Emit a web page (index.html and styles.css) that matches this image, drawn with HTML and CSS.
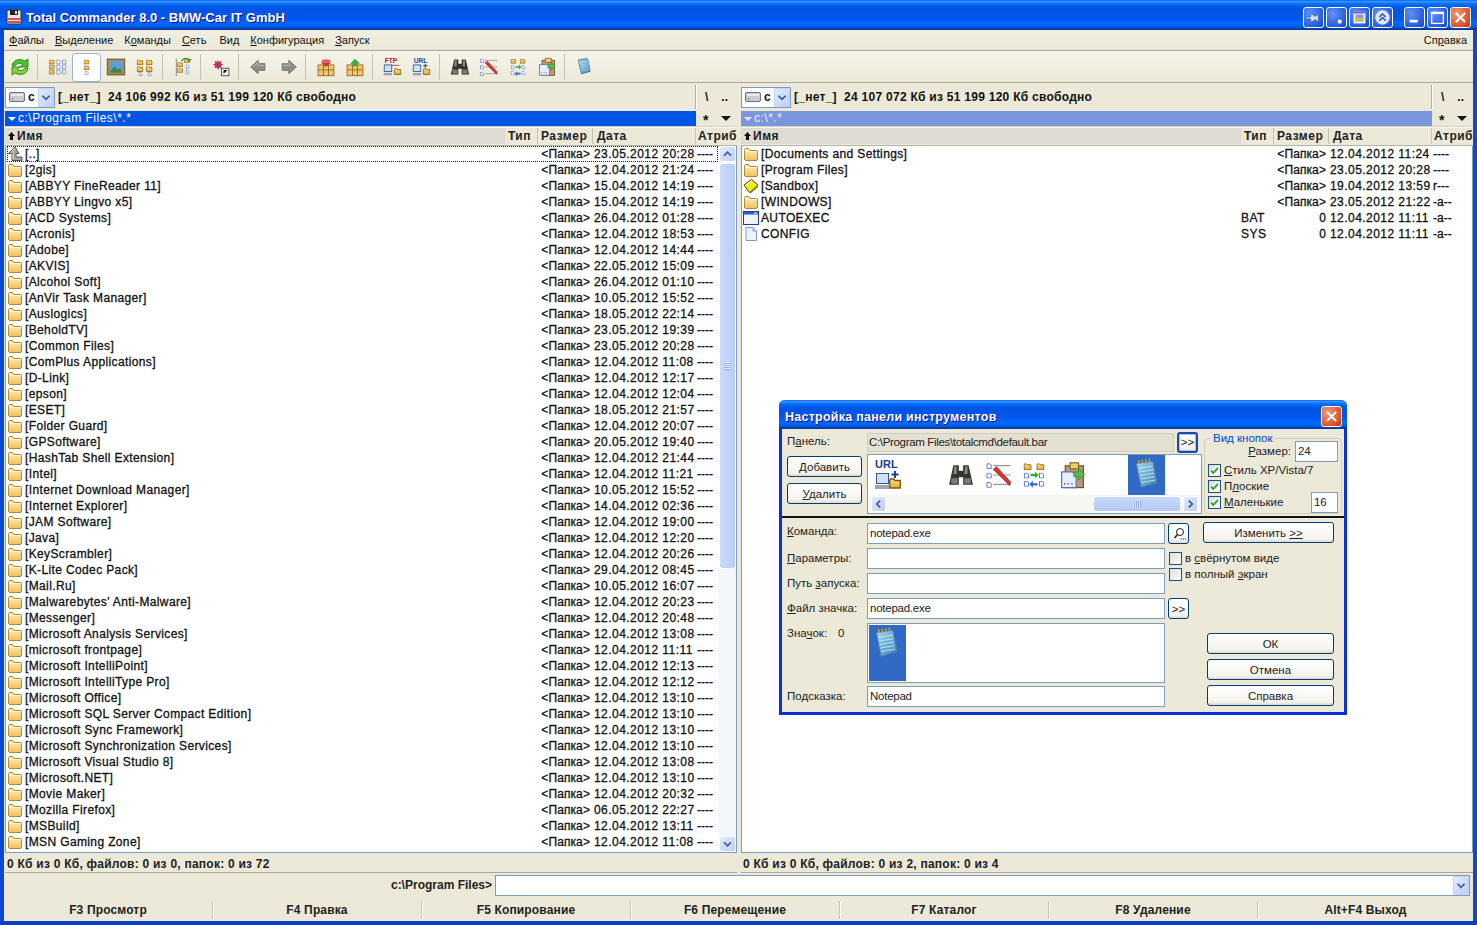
FILE: index.html
```html
<!DOCTYPE html>
<html lang="ru">
<head>
<meta charset="utf-8">
<title>Total Commander 8.0</title>
<link rel="stylesheet" href="styles.css">
</head>
<body>
<svg class="sprite" width="0" height="0" xmlns="http://www.w3.org/2000/svg">
<defs>
<linearGradient id="gf" x1="0" y1="0" x2="0" y2="1"><stop offset="0" stop-color="#fff0b8"/><stop offset="1" stop-color="#f0c060"/></linearGradient>
<linearGradient id="gn" x1="0" y1="0" x2="1" y2="1"><stop offset="0" stop-color="#9fdcf5"/><stop offset="1" stop-color="#3a80c8"/></linearGradient>
<linearGradient id="gb" x1="0" y1="0" x2="0" y2="1"><stop offset="0" stop-color="#ffe08a"/><stop offset="1" stop-color="#e8a838"/></linearGradient>
</defs>
<symbol id="fo" viewBox="0 0 16 16"><path d="M1.500 4.500V13a1.500 1.500 0 0 0 1.500 1.500h10a1.500 1.500 0 0 0 1.500-1.500V5.500a1 1 0 0 0-1-1H7L5.500 2.500H2.500a1 1 0 0 0-1 1z" fill="url(#gf)" stroke="#a98a3e"/><path d="M2.500 5.500h11" stroke="#fff6d0"/></symbol>
<symbol id="up" viewBox="0 0 16 16"><path d="M8 1 1.500 7.500H5V14.500h10V11H9V7.500h3z" fill="#a8a8a0" stroke="#55554f"/><path d="M8 2.500 4 7M6 8v5" stroke="#e8e8e4" fill="none"/></symbol>
<symbol id="sb" viewBox="0 0 17 16"><path d="M1 7 9 1l7 6-9 8z" fill="#f6ee10" stroke="#333"/><path d="M7 15 16 7v2l-8 7z" fill="#8a8420"/><path d="M3 7l6-4.500" stroke="#fffca8" fill="none"/></symbol>
<symbol id="ex" viewBox="0 0 16 16"><rect x=".5" y="1.500" width="15" height="13" fill="#eef3fc" stroke="#20408a"/><rect x="1" y="2" width="14" height="2.500" fill="#2c5cc8"/><path d="M11 3h3" stroke="#fff"/></symbol>
<symbol id="dc" viewBox="0 0 16 16"><path d="M3 1.500h7l3.500 3.500v9.500H3z" fill="#eef3fd" stroke="#7d9ad0"/><path d="M10 1.500V5h3.500" fill="#cfdcf5" stroke="#7d9ad0"/></symbol>
<symbol id="mf" viewBox="0 0 8 7"><path d="M.5 1.500v5h7v-5H4L3 .5H1z" fill="url(#gb)" stroke="#7a5a10" stroke-width=".9"/></symbol>
<symbol id="md" viewBox="0 0 6 7"><path d="M.5.5h3.500l1.500 1.500v4.500h-5z" fill="#fff" stroke="#3a56d0" stroke-width="1"/></symbol>
<symbol id="drv" viewBox="0 0 16 12"><rect x=".5" y="1.500" width="15" height="9" rx="1.500" fill="#c8cbd2" stroke="#6a6f7a"/><rect x="2" y="3" width="12" height="2" fill="#e9ebf0"/><rect x="2.500" y="7.500" width="2" height="1" fill="#2fae3a"/></symbol>
<symbol id="note" viewBox="0 0 24 30"><path d="M2 4 17 2 21 22 7 26z" fill="#3a6aa8"/><path d="M3 5l14-2 3.500 18L7 25z" fill="url(#gn)" stroke="#5f7fa8" stroke-width=".5"/><path d="M5 9l12-2M5.500 12l12-2M6 15l12-2M6.500 18l12-2M7 21l12-2" stroke="#d8f0c8" stroke-width=".7"/><path d="M5 5V2M8 4.500V1.500M11 4V1M14 3.500V.5" stroke="#d9a520" stroke-width="1.200"/></symbol>
<symbol id="bino" viewBox="0 0 24 24"><path d="M5 3h5v5h4V3h5l4 18h-9v-7h-4v7H1z" fill="#35352f"/><path d="M6 4h2v7H5zM16 4h2v7h-3z" fill="#8a8a84"/><rect x="3" y="15" width="6" height="5" fill="#7d7d77"/><rect x="15" y="15" width="6" height="5" fill="#7d7d77"/></symbol>
<symbol id="ren" viewBox="0 0 24 24"><use href="#md" x="1" y="2" width="5" height="5"/><use href="#md" x="1" y="10" width="5" height="5"/><use href="#md" x="1" y="18" width="5" height="5"/><path d="M7 4h15M7 12h15M7 20h15" stroke="#999"/><path d="M7 7l14 14 1-3L10 5z" fill="#d8342c" stroke="#8a1c18" stroke-width=".5"/></symbol>
<symbol id="syn" viewBox="0 0 24 24"><use href="#mf" x="3" y="2" width="7" height="6"/><use href="#mf" x="14" y="2" width="7" height="6"/><use href="#md" x="3" y="10" width="5" height="5"/><use href="#md" x="16" y="10" width="5" height="5"/><use href="#md" x="3" y="17" width="5" height="5"/><use href="#md" x="16" y="17" width="5" height="5"/><path d="M9 11h4V9l3 3-3 3v-2H9z" fill="#3aae2c"/><path d="M15 19h-4v-2l-3 3 3 3v-2h4z" fill="#2e6ad0"/></symbol>
<symbol id="clip" viewBox="0 0 24 24"><rect x="6" y="4" width="15" height="18" fill="#b89c78" stroke="#6a5232"/><rect x="10" y="1.500" width="7" height="5" fill="#f2cd6c" stroke="#8a6a22"/><path d="M3 9h9l3 3v10H3z" fill="#e8eefc" stroke="#5a72b8"/><path d="M5 19h1M8 19h1M11 19h1" stroke="#234"/><path d="M13 9h4V6l5 5-5 5v-3h-4z" fill="#58b84a" stroke="#2a7a24" stroke-width=".5"/></symbol>
</svg>

<div class="app">
  <header class="title">
    <svg class="t-ico" viewBox="0 0 16 16"><rect x="1" y="1" width="14" height="14" rx="1" fill="#e9e6e2" stroke="#333"/><rect x="4" y="1" width="8" height="5" fill="#222"/><rect x="9" y="2" width="2" height="3" fill="#ddd"/><rect x="1.500" y="9" width="13" height="2" fill="#d8505a"/><rect x="1.500" y="12" width="13" height="2" fill="#d8505a"/></svg>
    <span class="t-text">Total Commander 8.0 - BMW-Car IT GmbH</span>
    <div class="t-btns t-extra">
      <span class="cap"><svg viewBox="0 0 21 21"><path d="M2 10h5l1-4 4 3 1 0 3-3v10l-3-3-1 0-4 3-1-4H2z" fill="#cfe0fa" stroke="#1c3f9c" stroke-width=".6"/></svg></span>
      <span class="cap"><svg viewBox="0 0 21 21"><rect x="12" y="13" width="4" height="4" fill="#fff"/></svg></span>
      <span class="cap"><svg viewBox="0 0 21 21"><rect x="4" y="4" width="13" height="13" fill="#fff"/><rect x="4" y="4" width="13" height="2" fill="#3a6ad8"/><rect x="6" y="7" width="9" height="8" fill="#b58ad0"/><rect x="6" y="11" width="9" height="4" fill="#a8d060"/></svg></span>
      <span class="cap"><svg viewBox="0 0 21 21"><circle cx="10.500" cy="10.500" r="8" fill="#dfe7fa"/><path d="M7 10l3.500-3.500L14 10M7 14l3.500-3.500L14 14" fill="none" stroke="#1c4aa8" stroke-width="1.500"/></svg></span>
    </div>
    <div class="t-btns">
      <span class="cap"><svg viewBox="0 0 21 21"><rect x="5" y="13" width="9" height="3" fill="#fff"/></svg></span>
      <span class="cap"><svg viewBox="0 0 21 21"><path d="M4 5h13v12H4z" fill="none" stroke="#fff" stroke-width="1.500"/><path d="M4 5.500h13" stroke="#fff" stroke-width="2.500"/></svg></span>
      <span class="cap close"><svg viewBox="0 0 21 21"><path d="M5.500 5.500l10 10M15.500 5.500l-10 10" stroke="#fff" stroke-width="2.200"/></svg></span>
    </div>
  </header>

  <div class="main">
    <nav class="menu">
      <span class="mi"><u>Ф</u>айлы</span><span class="mi"><u>В</u>ыделение</span><span class="mi">К<u>о</u>манды</span><span class="mi"><u>С</u>еть</span><span class="mi mi-shift">Ви<u>д</u></span><span class="mi"><u>К</u>онфигурация</span><span class="mi"><u>З</u>апуск</span>
      <span class="mi help">Сп<u>р</u>авка</span>
    </nav>

    <div class="toolbar">
      <span class="tb"><svg viewBox="2 2 20 20"><path d="M4 11a8 7 0 0 1 13-5l3-2v8h-8l3-2.500a5 4 0 0 0-8 1.500z" fill="#4cc22c" stroke="#1f7a12" stroke-width=".8"/><path d="M20 13a8 7 0 0 1-13 5l-3 2v-8h8l-3 2.500a5 4 0 0 0 8-1.500z" fill="#7ed63e" stroke="#1f7a12" stroke-width=".8"/></svg></span>
      <span class="sep"></span>
      <span class="tb"><svg viewBox="0 0 24 24"><use href="#mf" x="1" y="3" width="7" height="6"/><use href="#md" x="10" y="3" width="5" height="6"/><use href="#md" x="17" y="3" width="5" height="6"/><use href="#mf" x="1" y="9" width="7" height="6"/><use href="#md" x="10" y="9" width="5" height="6"/><use href="#md" x="17" y="9" width="5" height="6"/><use href="#mf" x="1" y="15" width="7" height="6"/><use href="#md" x="10" y="15" width="5" height="6"/><use href="#md" x="17" y="15" width="5" height="6"/></svg></span>
      <span class="tb on"><svg viewBox="0 0 24 24"><use href="#mf" x="8" y="3" width="7" height="6"/><use href="#mf" x="8" y="10" width="7" height="6"/><use href="#md" x="9" y="17" width="5" height="5"/></svg></span>
      <span class="tb"><svg viewBox="0 0 24 24"><rect x="1.500" y="2.500" width="21" height="19" fill="#b58a4a" stroke="#5a4014"/><rect x="4" y="5" width="16" height="14" fill="#5aa0e0"/><path d="M4 19l6-8 4 4 3-2 3 6z" fill="#3e8a3c"/></svg></span>
      <span class="tb"><svg viewBox="0 0 24 24"><use href="#mf" x="2" y="3" width="8" height="7"/><use href="#mf" x="2" y="11" width="8" height="7"/><use href="#md" x="4" y="18" width="5" height="5"/><use href="#mf" x="13" y="3" width="8" height="7"/><use href="#mf" x="13" y="11" width="8" height="7"/><use href="#md" x="15" y="18" width="5" height="5"/></svg></span>
      <span class="sep"></span>
      <span class="tb"><svg viewBox="0 0 24 24"><path d="M4 2v21" stroke="#777"/><use href="#mf" x="5" y="6" width="7" height="6"/><use href="#mf" x="5" y="13" width="7" height="6"/><use href="#mf" x="13" y="1" width="7" height="6"/><use href="#md" x="15" y="9" width="5" height="5"/><use href="#md" x="15" y="16" width="5" height="5"/><path d="M10 5q5-6 9-1" fill="none" stroke="#2d9a28" stroke-width="1.500"/><path d="M20 7l2-5-5 1z" fill="#2d9a28"/></svg></span>
      <span class="sep"></span>
      <span class="tb"><svg viewBox="0 0 24 24"><path d="M8 3l1.500 3 3-1.500-.5 3.500 3 1-3 1.500 1 3-3-1-1.500 3-1.500-3-3 1 1-3-3-1.500 3-1-.5-3.500 3 1.500z" fill="#c0345c"/><rect x="12.500" y="13.500" width="9" height="9" fill="#fff" stroke="#333"/><path d="M15 20.500v-5h5z" fill="#111"/></svg></span>
      <span class="sep"></span>
      <span class="tb"><svg viewBox="0 0 24 24"><path d="M2 12l9-8v4h8v8h-8v4z" fill="#8e8e88" stroke="#66665f"/><path d="M4 12l6-5v3h8" fill="none" stroke="#c4c4be"/></svg></span>
      <span class="tb"><svg viewBox="0 0 24 24"><path d="M22 12l-9-8v4H5v8h8v4z" fill="#8e8e88" stroke="#66665f"/><path d="M6 10h8V7" fill="none" stroke="#c4c4be"/></svg></span>
      <span class="sep"></span>
      <span class="tb"><svg viewBox="0 0 24 24"><rect x="2.500" y="9.500" width="19" height="13" fill="#f2c66c" stroke="#8a6420"/><path d="M9 9.500v13M15 9.500v13M2.500 15.500h19" stroke="#8a6420"/><path d="M6 7h12l-6 5z" fill="#d6303a"/><path d="M8 3h8l2 4H6z" fill="#e25a5a"/></svg></span>
      <span class="tb"><svg viewBox="0 0 24 24"><rect x="2.500" y="9.500" width="19" height="13" fill="#f2c66c" stroke="#8a6420"/><path d="M9 9.500v13M15 9.500v13M2.500 15.500h19" stroke="#8a6420"/><path d="M12 2l6 6h-3v3H9V8H6z" fill="#3cae3c"/></svg></span>
      <span class="sep"></span>
      <span class="tb"><svg viewBox="0 0 24 24"><text x="2" y="7" class="ic-t ic-red">FTP</text><rect x="1.500" y="9.500" width="9" height="8" fill="#cfe0f2" stroke="#33558a"/><rect x="1" y="19" width="10" height="3" fill="#9aa6b6"/><use href="#mf" x="13" y="13" width="9" height="9"/><path d="M10 10h9" stroke="#c03030"/></svg></span>
      <span class="tb"><svg viewBox="0 0 24 24"><text x="2" y="7" class="ic-t ic-blue">URL</text><rect x="1.500" y="9.500" width="9" height="8" fill="#cfe0f2" stroke="#33558a"/><rect x="1" y="19" width="10" height="3" fill="#9aa6b6"/><use href="#mf" x="13" y="13" width="9" height="9"/><path d="M16 8v5M13.500 10.500h5" stroke="#1c3fa8" stroke-width="1.300"/></svg></span>
      <span class="sep"></span>
      <span class="tb"><svg viewBox="0 0 24 24"><use href="#bino"/></svg></span>
      <span class="tb"><svg viewBox="0 0 24 24"><use href="#ren"/></svg></span>
      <span class="tb"><svg viewBox="0 0 24 24"><use href="#syn"/></svg></span>
      <span class="tb"><svg viewBox="0 0 24 24"><use href="#clip"/></svg></span>
      <span class="sep"></span>
      <span class="tb"><svg viewBox="0 0 24 30" class="tb-note"><use href="#note"/></svg></span>
    </div>

    <div class="panels">
      <section class="panel">
        <div class="drive">
          <div class="combo"><svg class="drv"><use href="#drv"/></svg><b class="let">c</b><span class="arrow"><svg viewBox="0 0 16 18"><path d="M4 7l4 4 4-4" fill="none" stroke="#3c5a96" stroke-width="2"/></svg></span></div>
          <span class="free">[_нет_]&nbsp; 24 106 992 Кб из 51 199 120 Кб свободно</span>
          <span class="rootbtns"><b>\</b><b>..</b></span>
        </div>
        <div class="pathrow">
          <div class="path"><span class="ptri"></span>c:\Program Files\*.*</div>
          <span class="pbtn">*</span><span class="ptri2"></span>
        </div>
        <div class="head">
          <span class="h-name"><svg class="h-ar" viewBox="0 0 9 10"><path d="M4.500 1 1 5h2v4h3V5h2z" fill="#111"/></svg>Имя</span><span class="h-ex">Тип</span><span class="h-sz">Размер</span><span class="h-dt">Дата</span><span class="h-at">Атриб</span>
        </div>
        <div class="listwrap">
          <div class="list">
            <div class="row focus"><svg class="ic"><use href="#up"/></svg><span class="nm">[..]</span><span class="xt"></span><span class="sz">&lt;Папка&gt;</span><span class="dt">23.05.2012 20:28</span><span class="at">----</span></div>
            <div class="row"><svg class="ic"><use href="#fo"/></svg><span class="nm">[2gis]</span><span class="xt"></span><span class="sz">&lt;Папка&gt;</span><span class="dt">12.04.2012 21:24</span><span class="at">----</span></div>
            <div class="row"><svg class="ic"><use href="#fo"/></svg><span class="nm">[ABBYY FineReader 11]</span><span class="xt"></span><span class="sz">&lt;Папка&gt;</span><span class="dt">15.04.2012 14:19</span><span class="at">----</span></div>
            <div class="row"><svg class="ic"><use href="#fo"/></svg><span class="nm">[ABBYY Lingvo x5]</span><span class="xt"></span><span class="sz">&lt;Папка&gt;</span><span class="dt">15.04.2012 14:19</span><span class="at">----</span></div>
            <div class="row"><svg class="ic"><use href="#fo"/></svg><span class="nm">[ACD Systems]</span><span class="xt"></span><span class="sz">&lt;Папка&gt;</span><span class="dt">26.04.2012 01:28</span><span class="at">----</span></div>
            <div class="row"><svg class="ic"><use href="#fo"/></svg><span class="nm">[Acronis]</span><span class="xt"></span><span class="sz">&lt;Папка&gt;</span><span class="dt">12.04.2012 18:53</span><span class="at">----</span></div>
            <div class="row"><svg class="ic"><use href="#fo"/></svg><span class="nm">[Adobe]</span><span class="xt"></span><span class="sz">&lt;Папка&gt;</span><span class="dt">12.04.2012 14:44</span><span class="at">----</span></div>
            <div class="row"><svg class="ic"><use href="#fo"/></svg><span class="nm">[AKVIS]</span><span class="xt"></span><span class="sz">&lt;Папка&gt;</span><span class="dt">22.05.2012 15:09</span><span class="at">----</span></div>
            <div class="row"><svg class="ic"><use href="#fo"/></svg><span class="nm">[Alcohol Soft]</span><span class="xt"></span><span class="sz">&lt;Папка&gt;</span><span class="dt">26.04.2012 01:10</span><span class="at">----</span></div>
            <div class="row"><svg class="ic"><use href="#fo"/></svg><span class="nm">[AnVir Task Manager]</span><span class="xt"></span><span class="sz">&lt;Папка&gt;</span><span class="dt">10.05.2012 15:52</span><span class="at">----</span></div>
            <div class="row"><svg class="ic"><use href="#fo"/></svg><span class="nm">[Auslogics]</span><span class="xt"></span><span class="sz">&lt;Папка&gt;</span><span class="dt">18.05.2012 22:14</span><span class="at">----</span></div>
            <div class="row"><svg class="ic"><use href="#fo"/></svg><span class="nm">[BeholdTV]</span><span class="xt"></span><span class="sz">&lt;Папка&gt;</span><span class="dt">23.05.2012 19:39</span><span class="at">----</span></div>
            <div class="row"><svg class="ic"><use href="#fo"/></svg><span class="nm">[Common Files]</span><span class="xt"></span><span class="sz">&lt;Папка&gt;</span><span class="dt">23.05.2012 20:28</span><span class="at">----</span></div>
            <div class="row"><svg class="ic"><use href="#fo"/></svg><span class="nm">[ComPlus Applications]</span><span class="xt"></span><span class="sz">&lt;Папка&gt;</span><span class="dt">12.04.2012 11:08</span><span class="at">----</span></div>
            <div class="row"><svg class="ic"><use href="#fo"/></svg><span class="nm">[D-Link]</span><span class="xt"></span><span class="sz">&lt;Папка&gt;</span><span class="dt">12.04.2012 12:17</span><span class="at">----</span></div>
            <div class="row"><svg class="ic"><use href="#fo"/></svg><span class="nm">[epson]</span><span class="xt"></span><span class="sz">&lt;Папка&gt;</span><span class="dt">12.04.2012 12:04</span><span class="at">----</span></div>
            <div class="row"><svg class="ic"><use href="#fo"/></svg><span class="nm">[ESET]</span><span class="xt"></span><span class="sz">&lt;Папка&gt;</span><span class="dt">18.05.2012 21:57</span><span class="at">----</span></div>
            <div class="row"><svg class="ic"><use href="#fo"/></svg><span class="nm">[Folder Guard]</span><span class="xt"></span><span class="sz">&lt;Папка&gt;</span><span class="dt">12.04.2012 20:07</span><span class="at">----</span></div>
            <div class="row"><svg class="ic"><use href="#fo"/></svg><span class="nm">[GPSoftware]</span><span class="xt"></span><span class="sz">&lt;Папка&gt;</span><span class="dt">20.05.2012 19:40</span><span class="at">----</span></div>
            <div class="row"><svg class="ic"><use href="#fo"/></svg><span class="nm">[HashTab Shell Extension]</span><span class="xt"></span><span class="sz">&lt;Папка&gt;</span><span class="dt">12.04.2012 21:44</span><span class="at">----</span></div>
            <div class="row"><svg class="ic"><use href="#fo"/></svg><span class="nm">[Intel]</span><span class="xt"></span><span class="sz">&lt;Папка&gt;</span><span class="dt">12.04.2012 11:21</span><span class="at">----</span></div>
            <div class="row"><svg class="ic"><use href="#fo"/></svg><span class="nm">[Internet Download Manager]</span><span class="xt"></span><span class="sz">&lt;Папка&gt;</span><span class="dt">10.05.2012 15:52</span><span class="at">----</span></div>
            <div class="row"><svg class="ic"><use href="#fo"/></svg><span class="nm">[Internet Explorer]</span><span class="xt"></span><span class="sz">&lt;Папка&gt;</span><span class="dt">14.04.2012 02:36</span><span class="at">----</span></div>
            <div class="row"><svg class="ic"><use href="#fo"/></svg><span class="nm">[JAM Software]</span><span class="xt"></span><span class="sz">&lt;Папка&gt;</span><span class="dt">12.04.2012 19:00</span><span class="at">----</span></div>
            <div class="row"><svg class="ic"><use href="#fo"/></svg><span class="nm">[Java]</span><span class="xt"></span><span class="sz">&lt;Папка&gt;</span><span class="dt">12.04.2012 12:20</span><span class="at">----</span></div>
            <div class="row"><svg class="ic"><use href="#fo"/></svg><span class="nm">[KeyScrambler]</span><span class="xt"></span><span class="sz">&lt;Папка&gt;</span><span class="dt">12.04.2012 20:26</span><span class="at">----</span></div>
            <div class="row"><svg class="ic"><use href="#fo"/></svg><span class="nm">[K-Lite Codec Pack]</span><span class="xt"></span><span class="sz">&lt;Папка&gt;</span><span class="dt">29.04.2012 08:45</span><span class="at">----</span></div>
            <div class="row"><svg class="ic"><use href="#fo"/></svg><span class="nm">[Mail.Ru]</span><span class="xt"></span><span class="sz">&lt;Папка&gt;</span><span class="dt">10.05.2012 16:07</span><span class="at">----</span></div>
            <div class="row"><svg class="ic"><use href="#fo"/></svg><span class="nm">[Malwarebytes' Anti-Malware]</span><span class="xt"></span><span class="sz">&lt;Папка&gt;</span><span class="dt">12.04.2012 20:23</span><span class="at">----</span></div>
            <div class="row"><svg class="ic"><use href="#fo"/></svg><span class="nm">[Messenger]</span><span class="xt"></span><span class="sz">&lt;Папка&gt;</span><span class="dt">12.04.2012 20:48</span><span class="at">----</span></div>
            <div class="row"><svg class="ic"><use href="#fo"/></svg><span class="nm">[Microsoft Analysis Services]</span><span class="xt"></span><span class="sz">&lt;Папка&gt;</span><span class="dt">12.04.2012 13:08</span><span class="at">----</span></div>
            <div class="row"><svg class="ic"><use href="#fo"/></svg><span class="nm">[microsoft frontpage]</span><span class="xt"></span><span class="sz">&lt;Папка&gt;</span><span class="dt">12.04.2012 11:11</span><span class="at">----</span></div>
            <div class="row"><svg class="ic"><use href="#fo"/></svg><span class="nm">[Microsoft IntelliPoint]</span><span class="xt"></span><span class="sz">&lt;Папка&gt;</span><span class="dt">12.04.2012 12:13</span><span class="at">----</span></div>
            <div class="row"><svg class="ic"><use href="#fo"/></svg><span class="nm">[Microsoft IntelliType Pro]</span><span class="xt"></span><span class="sz">&lt;Папка&gt;</span><span class="dt">12.04.2012 12:12</span><span class="at">----</span></div>
            <div class="row"><svg class="ic"><use href="#fo"/></svg><span class="nm">[Microsoft Office]</span><span class="xt"></span><span class="sz">&lt;Папка&gt;</span><span class="dt">12.04.2012 13:10</span><span class="at">----</span></div>
            <div class="row"><svg class="ic"><use href="#fo"/></svg><span class="nm">[Microsoft SQL Server Compact Edition]</span><span class="xt"></span><span class="sz">&lt;Папка&gt;</span><span class="dt">12.04.2012 13:10</span><span class="at">----</span></div>
            <div class="row"><svg class="ic"><use href="#fo"/></svg><span class="nm">[Microsoft Sync Framework]</span><span class="xt"></span><span class="sz">&lt;Папка&gt;</span><span class="dt">12.04.2012 13:10</span><span class="at">----</span></div>
            <div class="row"><svg class="ic"><use href="#fo"/></svg><span class="nm">[Microsoft Synchronization Services]</span><span class="xt"></span><span class="sz">&lt;Папка&gt;</span><span class="dt">12.04.2012 13:10</span><span class="at">----</span></div>
            <div class="row"><svg class="ic"><use href="#fo"/></svg><span class="nm">[Microsoft Visual Studio 8]</span><span class="xt"></span><span class="sz">&lt;Папка&gt;</span><span class="dt">12.04.2012 13:08</span><span class="at">----</span></div>
            <div class="row"><svg class="ic"><use href="#fo"/></svg><span class="nm">[Microsoft.NET]</span><span class="xt"></span><span class="sz">&lt;Папка&gt;</span><span class="dt">12.04.2012 13:10</span><span class="at">----</span></div>
            <div class="row"><svg class="ic"><use href="#fo"/></svg><span class="nm">[Movie Maker]</span><span class="xt"></span><span class="sz">&lt;Папка&gt;</span><span class="dt">12.04.2012 20:32</span><span class="at">----</span></div>
            <div class="row"><svg class="ic"><use href="#fo"/></svg><span class="nm">[Mozilla Firefox]</span><span class="xt"></span><span class="sz">&lt;Папка&gt;</span><span class="dt">06.05.2012 22:27</span><span class="at">----</span></div>
            <div class="row"><svg class="ic"><use href="#fo"/></svg><span class="nm">[MSBuild]</span><span class="xt"></span><span class="sz">&lt;Папка&gt;</span><span class="dt">12.04.2012 13:11</span><span class="at">----</span></div>
            <div class="row"><svg class="ic"><use href="#fo"/></svg><span class="nm">[MSN Gaming Zone]</span><span class="xt"></span><span class="sz">&lt;Папка&gt;</span><span class="dt">12.04.2012 11:08</span><span class="at">----</span></div>
            <div class="row"><svg class="ic"><use href="#fo"/></svg></div>
          </div>
          <div class="scroll">
            <span class="sb-btn"><svg viewBox="0 0 16 16"><path d="M4 10l4-4 4 4" fill="none" stroke="#3c5a96" stroke-width="2"/></svg></span>
            <span class="sb-thumb"><span class="grip"></span></span>
            <span class="sb-track"></span>
            <span class="sb-btn"><svg viewBox="0 0 16 16"><path d="M4 6l4 4 4-4" fill="none" stroke="#3c5a96" stroke-width="2"/></svg></span>
          </div>
        </div>
        <div class="status">0 Кб из 0 Кб, файлов: 0 из 0, папок: 0 из 72</div>
      </section>

      <section class="panel">
        <div class="drive">
          <div class="combo"><svg class="drv"><use href="#drv"/></svg><b class="let">c</b><span class="arrow"><svg viewBox="0 0 16 18"><path d="M4 7l4 4 4-4" fill="none" stroke="#3c5a96" stroke-width="2"/></svg></span></div>
          <span class="free">[_нет_]&nbsp; 24 107 072 Кб из 51 199 120 Кб свободно</span>
          <span class="rootbtns"><b>\</b><b>..</b></span>
        </div>
        <div class="pathrow">
          <div class="path off"><span class="ptri off"></span>c:\*.*</div>
          <span class="pbtn">*</span><span class="ptri2"></span>
        </div>
        <div class="head">
          <span class="h-name"><svg class="h-ar" viewBox="0 0 9 10"><path d="M4.500 1 1 5h2v4h3V5h2z" fill="#111"/></svg>Имя</span><span class="h-ex">Тип</span><span class="h-sz">Размер</span><span class="h-dt">Дата</span><span class="h-at">Атриб</span>
        </div>
        <div class="listwrap">
          <div class="list">
            <div class="row"><svg class="ic"><use href="#fo"/></svg><span class="nm">[Documents and Settings]</span><span class="xt"></span><span class="sz">&lt;Папка&gt;</span><span class="dt">12.04.2012 11:24</span><span class="at">----</span></div>
            <div class="row"><svg class="ic"><use href="#fo"/></svg><span class="nm">[Program Files]</span><span class="xt"></span><span class="sz">&lt;Папка&gt;</span><span class="dt">23.05.2012 20:28</span><span class="at">----</span></div>
            <div class="row"><svg class="ic"><use href="#sb"/></svg><span class="nm">[Sandbox]</span><span class="xt"></span><span class="sz">&lt;Папка&gt;</span><span class="dt">19.04.2012 13:59</span><span class="at">r---</span></div>
            <div class="row"><svg class="ic"><use href="#fo"/></svg><span class="nm">[WINDOWS]</span><span class="xt"></span><span class="sz">&lt;Папка&gt;</span><span class="dt">23.05.2012 21:22</span><span class="at">-a--</span></div>
            <div class="row"><svg class="ic"><use href="#ex"/></svg><span class="nm">AUTOEXEC</span><span class="xt">BAT</span><span class="sz">0</span><span class="dt">12.04.2012 11:11</span><span class="at">-a--</span></div>
            <div class="row"><svg class="ic"><use href="#dc"/></svg><span class="nm">CONFIG</span><span class="xt">SYS</span><span class="sz">0</span><span class="dt">12.04.2012 11:11</span><span class="at">-a--</span></div>
          </div>
        </div>
        <div class="status">0 Кб из 0 Кб, файлов: 0 из 2, папок: 0 из 4</div>
      </section>
    </div>

    <div class="cmd">
      <span class="prompt">c:\Program Files&gt;</span>
      <div class="cmdbox"><span class="arrow"><svg viewBox="0 0 16 18"><path d="M4 7l4 4 4-4" fill="none" stroke="#3c5a96" stroke-width="2"/></svg></span></div>
    </div>

    <div class="fkeys">
      <span class="fk">F3 Просмотр</span><span class="fk">F4 Правка</span><span class="fk">F5 Копирование</span><span class="fk">F6 Перемещение</span><span class="fk">F7 Каталог</span><span class="fk">F8 Удаление</span><span class="fk">Alt+F4 Выход</span>
    </div>
  </div>

  <div class="dialog">
    <div class="d-title">
      <span class="d-caption">Настройка панели инструментов</span>
      <span class="cap close d-close"><svg viewBox="0 0 21 21"><path d="M5.500 5.500l10 10M15.500 5.500l-10 10" stroke="#fff" stroke-width="2.200"/></svg></span>
    </div>
    <div class="d-top">
      <div class="d-left">
        <div class="d-panel-label"><span>П<u>а</u>нель:</span></div>
        <button class="btn b-side"><span><u>Д</u>обавить</span></button>
        <button class="btn b-side"><span><u>У</u>далить</span></button>
      </div>
      <div class="d-mid">
        <div class="d-pathline">
          <div class="ro">C:\Program Files\totalcmd\default.bar</div>
          <button class="btn b-mini b-focus">&gt;&gt;</button>
        </div>
        <div class="strip">
          <div class="strip-icons">
            <svg class="s-ico s-url" viewBox="0 0 26 34"><text x="0" y="10" class="ic-u">URL</text><rect x="1.500" y="15.500" width="12" height="10" fill="#cfe0f2" stroke="#33558a"/><rect x="0" y="27" width="14" height="4" fill="#9aa6b6"/><use href="#mf" x="14" y="20" width="12" height="11"/><path d="M20 13v7M16.500 16.500h7" stroke="#1c3fa8" stroke-width="2"/></svg>
            <svg class="s-ico s-bino" viewBox="0 0 24 24"><use href="#bino"/></svg>
            <svg class="s-ico s-ren" viewBox="0 0 24 24"><use href="#ren"/></svg>
            <svg class="s-ico s-sync" viewBox="0 0 24 24"><use href="#syn"/></svg>
            <svg class="s-ico s-clip" viewBox="0 0 24 24"><use href="#clip"/></svg>
            <span class="s-sel"><svg class="s-note" viewBox="0 0 24 30"><use href="#note"/></svg></span>
          </div>
          <div class="hbar">
            <span class="hb-btn"><svg viewBox="0 0 15 15"><path d="M9.500 3.500l-4 4 4 4" fill="none" stroke="#3c5a96" stroke-width="2"/></svg></span>
            <span class="hb-track"></span>
            <span class="hb-thumb"><span class="hgrip"></span></span>
            <span class="hb-btn"><svg viewBox="0 0 15 15"><path d="M5.500 3.500l4 4-4 4" fill="none" stroke="#3c5a96" stroke-width="2"/></svg></span>
          </div>
        </div>
      </div>
      <fieldset class="group">
        <legend>Вид кнопок</legend>
        <div class="g-size"><span><u>Р</u>азмер:</span><div class="field f-size">24</div></div>
        <div class="g-line"><span class="chk on"><svg viewBox="0 0 13 13"><path d="M2.500 6.500 5 9.500 10.500 3.500" fill="none" stroke="#21a121" stroke-width="2"/></svg></span><span><u>С</u>тиль XP/Vista/7</span></div>
        <div class="g-line"><span class="chk on"><svg viewBox="0 0 13 13"><path d="M2.500 6.500 5 9.500 10.500 3.500" fill="none" stroke="#21a121" stroke-width="2"/></svg></span><span>П<u>л</u>оские</span></div>
        <div class="g-line"><span class="chk on"><svg viewBox="0 0 13 13"><path d="M2.500 6.500 5 9.500 10.500 3.500" fill="none" stroke="#21a121" stroke-width="2"/></svg></span><span><u>М</u>аленькие</span><div class="field f-small">16</div></div>
      </fieldset>
    </div>
    <div class="d-bottom">
      <div class="d-form">
        <label class="lbl lbl-first"><u>К</u>оманда:</label><div class="field">notepad.exe</div><button class="btn b-mini"><svg viewBox="0 0 16 16" class="lens"><circle cx="9" cy="6" r="3.500" fill="none" stroke="#222"/><path d="M6.500 8.500 3.500 12" stroke="#222" stroke-width="1.500"/><path d="M10 13h1M12 13h1M14 13h1" stroke="#222"/></svg></button>
        <label class="lbl"><u>П</u>араметры:</label><div class="field"></div><span></span>
        <label class="lbl">Путь <u>з</u>апуска:</label><div class="field"></div><span></span>
        <label class="lbl"><u>Ф</u>айл значка:</label><div class="field">notepad.exe</div><button class="btn b-mini">&gt;&gt;</button>
        <label class="lbl lbl-top"><span>Зна<u>ч</u>ок:</span><span>0</span></label><div class="field f-ico"><span class="ico-sel"><svg class="s-note" viewBox="0 0 24 30"><use href="#note"/></svg></span></div><span></span>
        <label class="lbl">По<u>д</u>сказка:</label><div class="field">Notepad</div><span></span>
      </div>
      <div class="d-side">
        <button class="btn b-change"><span>Изменить <u>&gt;&gt;</u></span></button>
        <div class="d-opts">
          <div class="g-line"><span class="chk"></span><span>в <u>с</u>вёрнутом виде</span></div>
          <div class="g-line"><span class="chk"></span><span>в полный <u>э</u>кран</span></div>
        </div>
        <button class="btn b-act">ОК</button>
        <button class="btn b-act">Отмена</button>
        <button class="btn b-act">Справка</button>
      </div>
    </div>
  </div>
</div>
</body>
</html>
```
FILE: styles.css
```css
* { box-sizing: border-box; }
html, body { margin: 0; padding: 0; }
body { width: 1477px; height: 925px; overflow: hidden; background: #0d53e4; font-family: "Liberation Sans", Arial, sans-serif; }
.sprite { display: block; width: 0; height: 0; overflow: hidden; }
.app { position: relative; width: 1477px; height: 925px; display: flex; flex-direction: column; background: #0a49d8; border-bottom: 4px solid #0a3fc4; }

/* title bar */
.title { height: 30px; flex: none; display: flex; align-items: center; padding: 4px 0 0 6px; color: #fff;
  background: linear-gradient(180deg,#0058ee 0,#3a93ff 4%,#288eff 7%,#127dff 10%,#036ffc 14%,#0262ee 20%,#0057e5 26%,#0054e3 30%,#0055eb 56%,#005bf5 66%,#026afe 76%,#0062ef 86%,#0052d6 92%,#0040ab 96%,#003092 100%); }
.t-ico { width: 16px; height: 16px; flex: none; }
.t-text { margin-left: 4px; font-size: 13px; font-weight: 700; text-shadow: 1px 1px 0 #0f1089; }
.t-btns { display: flex; gap: 2px; margin-left: 11px; margin-right: 6px; }
.t-extra { margin-left: auto; margin-right: 0; gap: 2px; }
.cap { width: 21px; height: 21px; border: 1px solid #fff; border-radius: 3px; display: block; background: radial-gradient(circle at 30% 30%, #5e91f5, #2a5ce0 70%, #1a44bc); }
.cap svg { display: block; width: 19px; height: 19px; }
.cap.close { background: radial-gradient(circle at 30% 30%, #f09a7a, #de4f28 70%, #b83210); }

/* main frame */
.main { flex: 1; margin: 0 4px; display: flex; flex-direction: column; background: #ece9d8; min-height: 0; }
.menu { height: 21px; flex: none; display: flex; align-items: center; gap: 11px; font-size: 11px; color: #111; background: linear-gradient(180deg,#f1efe3,#ece9d8); border-bottom: 1px solid #aca899; box-shadow: 0 1px 0 #fff; padding-left: 5px; }
.mi { white-space: nowrap; }
.mi-shift { margin-left: 2px; }
.help { margin-left: auto; margin-right: 6px; }
.toolbar { height: 32px; flex: none; display: flex; align-items: center; padding: 1px 0 0 1px; background: linear-gradient(180deg,#f7f5ec,#ece9d8); border-bottom: 1px solid #aca899; }
.tb { width: 29px; height: 29px; display: flex; align-items: center; justify-content: center; flex: none; border: 1px solid transparent; border-radius: 3px; }
.tb svg { width: 20px; height: 20px; display: block; }
.tb.on { background: #fff; border-color: #9db4d6; }
.tb .tb-note { width: 17px; height: 20px; }
.sep { width: 9px; flex: none; height: 26px; display: block; background: linear-gradient(#c4c2b2,#c4c2b2) 3px 0/1px 100% no-repeat; }
.ic-t { font: 700 8px "Liberation Sans", sans-serif; }
.ic-red { fill: #b01818; } .ic-blue { fill: #1c3fa8; }
.ic-u { font: 700 11px "Liberation Sans", sans-serif; fill: #1c3a96; }

/* panels */
.panels { height: 790px; flex: none; display: flex; gap: 4px; padding-left: 1px; }
.panel { width: 732px; flex: none; display: flex; flex-direction: column; min-height: 0; }
.drive { height: 27px; flex: none; display: flex; align-items: center; padding-top: 1px; font-size: 12px; font-weight: 700; color: #111; }
.combo { width: 50px; height: 21px; flex: none; display: flex; align-items: center; background: #fff; border: 1px solid #7f9db9; padding-left: 3px; }
.drv { width: 16px; height: 12px; flex: none; }
.let { margin-left: 3px; font-size: 12px; }
.arrow { width: 16px; height: 19px; margin-left: auto; flex: none; background: linear-gradient(135deg,#e1eafe,#bfd0f6); border: 1px solid #c3d3f8; border-radius: 1px; display: block; }
.arrow svg { display: block; width: 14px; height: 17px; }
.free { margin-left: 3px; letter-spacing: .27px; white-space: nowrap; flex: 1; }
.rootbtns { width: 42px; flex: none; height: 24px; display: flex; align-items: center; gap: 13px; padding-left: 9px; border-left: 1px solid #b3b0a0; box-shadow: inset 1px 0 0 #fff; }
.pathrow { height: 17px; flex: none; display: flex; align-items: center; border-bottom: 1px solid #d5d2c2; padding-top: 1px; }
.path { width: 691px; height: 15px; flex: none; background: #0055e5; color: #fff; font-size: 12px; letter-spacing: .5px; line-height: 15px; display: flex; align-items: center; padding-left: 3px; overflow: hidden; }
.path.off { background: #7b96dd; color: #eef2fb; }
.ptri { width: 0; height: 0; border: 4px solid transparent; border-top: 4px solid #fff; border-bottom-width: 0; margin-right: 2px; flex: none; }
.ptri.off { border-top-color: #dfe6f8; }
.pbtn { margin-left: 7px; font-size: 14px; font-weight: 700; color: #111; line-height: 15px; width: 10px; padding-top: 3px; }
.ptri2 { width: 0; height: 0; margin-left: 8px; border: 5px solid transparent; border-top: 5px solid #111; border-bottom-width: 0; }
.head { height: 19px; flex: none; display: flex; align-items: center; font-size: 12px; font-weight: 700; letter-spacing: .5px; color: #222; background: #ece9d8; border-top: 1px solid #f7f6ef; border-bottom: 1px solid #b6b4a4; padding-bottom: 1px; }
.head > span { display: flex; align-items: center; height: 100%; flex: none; white-space: nowrap; }
.h-ar { width: 9px; height: 10px; margin: 0 1px 0 2px; flex: none; }
.h-name { width: 500px; background: #dfddd3; }
.h-ex { width: 32px; padding-left: 3px; }
.h-sz { width: 55px; padding-left: 3px; border-left: 1px solid #c5c3b4; }
.h-dt { width: 103px; padding-left: 4px; border-left: 1px solid #c5c3b4; }
.h-at { width: 42px; padding-left: 2px; border-left: 1px solid #c5c3b4; }
.listwrap { height: 707px; flex: none; display: flex; background: #fff; border: 1px solid #7f9db9; border-top: 0; overflow: hidden; }
.list { flex: 1; min-width: 0; overflow: hidden; padding-left: 1px; }
.row { height: 16px; width: 711px; display: flex; align-items: center; font-size: 12px; color: #111; letter-spacing: .45px; -webkit-text-stroke: .3px #111; white-space: nowrap; }
.row.focus { outline: 1px dotted #222; outline-offset: -1px; }
.ic { width: 16px; height: 16px; flex: none; margin-right: 2px; }
.nm { width: 480px; flex: none; letter-spacing: .37px; }
.xt { width: 36px; flex: none; }
.sz { width: 49px; flex: none; text-align: right; letter-spacing: .1px; }
.dt { width: 101px; flex: none; margin-left: 4px; }
.at { width: 21px; flex: none; margin-left: 2px; letter-spacing: 0; }
.scroll { width: 17px; flex: none; display: flex; flex-direction: column; background: #f3f6fd; }
.sb-btn { height: 16px; flex: none; display: block; background: linear-gradient(135deg,#e1eafe,#bfd0f6); border: 1px solid #fff; border-radius: 2px; }
.sb-btn svg { display: block; width: 15px; height: 14px; }
.sb-thumb { height: 406px; flex: none; display: flex; align-items: center; justify-content: center; margin-top: 1px; background: linear-gradient(90deg,#cad8fb,#b9cdf8); border: 1px solid #fff; border-radius: 3px; }
.grip { width: 7px; height: 8px; display: block; background: repeating-linear-gradient(180deg,#eef2fd 0,#eef2fd 1px,#8faae6 1px,#8faae6 2px); }
.sb-track { flex: 1; }
.status { height: 20px; flex: none; display: flex; align-items: center; padding: 2px 0 0 2px; font-size: 12px; font-weight: 700; letter-spacing: .24px; color: #222; border-bottom: 1px solid #aca899; }
.cmd { height: 24px; flex: none; display: flex; align-items: center; justify-content: flex-end; padding: 0 3px 0 0; }
.prompt { font-size: 12px; font-weight: 700; color: #222; margin-right: 3px; }
.cmdbox { width: 975px; height: 21px; flex: none; background: #fff; border: 1px solid #7f9db9; display: flex; }
.cmdbox .arrow { height: 19px; }
.fkeys { height: 24px; flex: none; display: flex; align-items: center; padding-top: 1px; }
.fk { width: 209px; flex: none; height: 18px; display: flex; align-items: center; justify-content: center; font-size: 12px; font-weight: 700; letter-spacing: .15px; color: #222; border-right: 1px solid #c9c6b6; box-shadow: 1px 0 0 #fff; }
.fk:last-child { border-right: 0; box-shadow: none; width: 215px; }

/* dialog */
.dialog { position: absolute; left: 779px; top: 400px; width: 568px; height: 315px; display: flex; flex-direction: column; background: #ece9d8; border: 3px solid #0831d9; border-top: 0; border-radius: 6px 6px 0 0; font-size: 11.500px; color: #222; }
.d-title { height: 29px; flex: none; margin: 0 -3px; padding: 3px 5px 0 6px; display: flex; align-items: center; justify-content: space-between; color: #fff; font-size: 12.500px; font-weight: 700; letter-spacing: .25px; text-shadow: 1px 1px 0 #0f1089; border-radius: 6px 6px 0 0;
  background: linear-gradient(180deg,#0058ee 0,#3a93ff 4%,#288eff 7%,#127dff 10%,#036ffc 14%,#0262ee 20%,#0057e5 26%,#0054e3 30%,#0055eb 56%,#005bf5 66%,#026afe 76%,#0062ef 86%,#0052d6 92%,#0040ab 96%,#003092 100%); }
.d-caption { padding-top: 1px; }
.d-close { flex: none; }
.d-top { height: 89px; flex: none; display: flex; border-bottom: 2px solid #111; padding: 1px 0 0 4px; }
.d-left { width: 81px; flex: none; display: flex; flex-direction: column; padding-left: 1px; }
.d-panel-label { height: 22px; display: flex; align-items: center; }
.btn { font: inherit; color: #222; background: linear-gradient(180deg,#fff,#f4f3ee 85%,#dcd8c8); border: 1px solid #003c74; border-radius: 3px; padding: 0; display: flex; align-items: center; justify-content: center; }
.b-side { width: 75px; height: 21px; margin-top: 4px; margin-bottom: 2px; }
.d-mid { width: 336px; flex: none; display: flex; flex-direction: column; }
.d-pathline { height: 24px; display: flex; align-items: center; }
.ro { width: 307px; height: 19px; flex: none; background: #e4e1d2; border: 1px solid #cfccbc; padding-left: 1px; line-height: 17px; letter-spacing: -.33px; white-space: nowrap; }
.b-mini { width: 21px; height: 21px; flex: none; margin-left: 3px; letter-spacing: 0; }
.b-focus { border-width: 2px; border-color: #1c4aa8; box-shadow: inset 0 0 0 1px #a8c4f0; }
.strip { width: 335px; height: 60px; display: flex; flex-direction: column; background: #fff; border: 1px solid #7f9db9; }
.strip-icons { flex: 1; min-height: 0; display: flex; align-items: center; padding-left: 7px; }
.s-ico { flex: none; display: block; }
.s-url { width: 26px; height: 34px; }
.s-bino { width: 26px; height: 26px; margin-left: 47px; }
.s-ren { width: 28px; height: 28px; margin-left: 11px; }
.s-sync { width: 28px; height: 28px; margin-left: 7px; }
.s-clip { width: 29px; height: 29px; margin-left: 10px; }
.s-sel { width: 37px; height: 40px; margin-left: 41px; flex: none; background: #3169c6; display: flex; align-items: center; justify-content: center; }
.s-note { width: 28px; height: 35px; display: block; }
.hbar { height: 18px; flex: none; display: flex; background: #f6f6f2; padding: 1px 1px 1px 3px; }
.hb-btn { width: 15px; height: 16px; flex: none; display: block; background: linear-gradient(135deg,#e1eafe,#bfd0f6); border: 1px solid #fff; border-radius: 2px; }
.hb-btn svg { display: block; width: 13px; height: 14px; }
.hb-track { width: 207px; flex: none; }
.hb-thumb { width: 88px; flex: none; display: flex; align-items: center; justify-content: center; margin-right: 2px; background: linear-gradient(180deg,#cad8fb,#b4c9f7); border: 1px solid #fff; border-radius: 3px; }
.hgrip { width: 8px; height: 7px; display: block; background: repeating-linear-gradient(90deg,#eef2fd 0,#eef2fd 1px,#8faae6 1px,#8faae6 2px); }
.group { width: 138px; height: 80px; flex: none; margin: 4px 0 0 1px; padding: 0 3px 0 3px; border: 1px solid #d0d0bf; border-radius: 4px; display: block; min-width: 0; }
.group legend { color: #0046d5; padding: 0 2px; margin-left: 3px; font-size: 11.500px; line-height: 8px; }
.g-size { display: flex; align-items: center; justify-content: flex-end; gap: 4px; height: 22px; margin-top: -2px; }
.f-size { width: 43px; height: 21px; flex: none; }
.g-line { display: flex; align-items: center; gap: 3px; height: 16px; white-space: nowrap; }
.chk { width: 13px; height: 13px; flex: none; background: linear-gradient(135deg,#dcdcd7,#fff); border: 1px solid #1c5180; display: block; }
.chk svg { display: block; width: 11px; height: 11px; }
.f-small { width: 27px; height: 21px; margin-left: auto; flex: none; }
.d-bottom { flex: 1; min-height: 0; display: flex; padding: 5px 0 0 4px; }
.d-form { width: 403px; flex: none; display: grid; grid-template-columns: 81px 298px 24px; grid-template-rows: 21px 21px 21px 21px 59px 21px; row-gap: 4px; align-items: start; }
.lbl { display: block; line-height: 21px; height: 21px; padding-left: 1px; white-space: nowrap; }
.lbl-first { line-height: 17px; height: 17px; }
.lbl-top { display: flex; gap: 11px; }
.field { height: 21px; background: #fff; border: 1px solid #7f9db9; padding-left: 2px; line-height: 19px; letter-spacing: -.25px; }
.f-ico { height: 60px; padding: 1px; }
.ico-sel { width: 37px; height: 56px; display: block; background: #3169c6; padding: 2px 4px; }
.d-form .b-mini { margin-left: 3px; }
.d-side { width: 145px; flex: none; display: flex; flex-direction: column; align-items: flex-end; margin-top: -1px; }
.b-change { width: 131px; height: 21px; flex: none; }
.d-opts { width: 145px; margin-top: 7px; align-self: flex-start; margin-left: -20px; height: 83px; }
.b-act { width: 127px; height: 21px; flex: none; margin-bottom: 5px; }
.lens { width: 16px; height: 16px; display: block; }
```
